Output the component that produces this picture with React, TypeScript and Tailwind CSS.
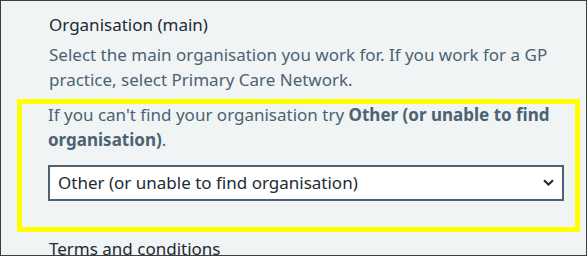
export default function App() {
  return (
    <div className="w-[588px] h-[257px] bg-white">
      <div
        className="w-[587px] h-[256px] overflow-hidden border border-[#3f3f3f] bg-[#f0f4f5] text-[#212b32]"
        style={{ fontFamily: '"Noto Sans", "Open Sans", Arial, sans-serif' }}
      >
        <div className="pl-[48px] pt-[11px]">
          <label className="block text-[17px] leading-[26px]">Organisation (main)</label>
          <p className="mt-[4px] w-[525px] text-[17px] leading-[25px] text-[#4c6272]">
            Select the main organisation you work for. If you work for a GP practice, select Primary Care Network.
          </p>
        </div>

        <div className="ml-[16px] mr-[6px] mt-[7px] border-[5px] border-[#ffff00] pl-[26px] pb-[26px]">
          <p className="-mt-[2px] text-[17px] leading-[25px] text-[#4c6272]">
            If you can't find your organisation try <strong className="font-bold">Other (or unable to find organisation)</strong>.
          </p>
          <div className="relative mt-[13px] w-[516px]">
            <select
              defaultValue="other"
              className="block w-full h-[36px] appearance-none rounded-none border-2 border-[#4c6272] bg-white pl-[8px] pr-[30px] text-[17px] text-[#212b32] outline-none"
            >
              <option value="other">Other (or unable to find organisation)</option>
            </select>
            <svg
              className="pointer-events-none absolute right-[10px] top-[14px]"
              width="11"
              height="7"
              viewBox="0 0 11 7"
              fill="none"
            >
              <path d="M1 1.2l4.5 4.3L10 1.2" stroke="#212b32" strokeWidth="2.2" />
            </svg>
          </div>
        </div>

        <div className="pl-[48px] mt-[4px] text-[17px] leading-[26px]">Terms and conditions</div>
      </div>
    </div>
  );
}
